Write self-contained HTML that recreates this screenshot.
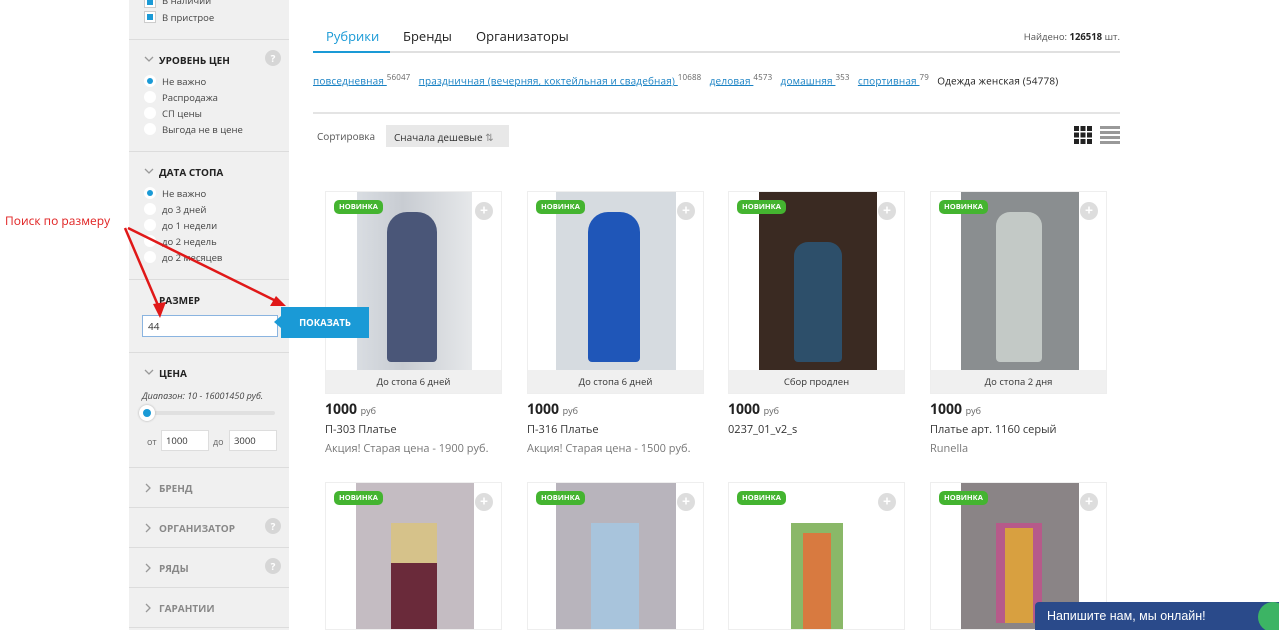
<!DOCTYPE html>
<html><head><meta charset="utf-8"><style>
*{box-sizing:border-box;margin:0;padding:0}
html,body{width:1279px;height:630px;overflow:hidden}
body{background:#fff;font-family:"Open Sans","Liberation Sans","DejaVu Sans",sans-serif;color:#333;position:relative;font-size:11px}
.sb{position:absolute;left:129px;top:0;width:160px;height:630px;background:#f0f0f0}
.ab{position:absolute}
.hr{position:absolute;left:129px;width:160px;height:1px;background:#dcdcdc}
.h{position:absolute;left:159px;font-weight:bold;font-size:10px;color:#222}
.hg{color:#888}
.chev{position:absolute;left:144px}
.q{position:absolute;left:265px;width:16px;height:16px;border-radius:50%;background:#d6d6d6;color:#fff;font-size:10px;font-weight:bold;text-align:center;line-height:16px}
.r{position:absolute;left:144px;width:12px;height:12px;border-radius:50%;background:#fff}
.r.on::after{content:"";position:absolute;left:3px;top:3px;width:6px;height:6px;border-radius:50%;background:#1a9ad6}
.rl{position:absolute;left:162px;font-size:9.5px;color:#444}
.card{position:absolute;width:177px;height:203px;border:1px solid #eee;background:#fff;overflow:hidden}
.img{position:absolute;top:0;height:178px}
.strip{position:absolute;left:0;right:0;top:178px;height:24px;background:#f0f0f0;font-size:9.5px;text-align:center;line-height:24px;color:#333}
.new{position:absolute;left:8px;top:8px;background:#44b430;color:#fff;font-size:7.5px;font-weight:bold;padding:2px 5px;border-radius:5px}
.plus{position:absolute;right:8px;top:10px;width:18px;height:18px;border-radius:50%;background:#ddd;color:#fff;font-weight:bold;font-size:14px;text-align:center;line-height:18px}
.price{position:absolute;font-size:14px;font-weight:bold;color:#222}
.price span{font-size:9px;font-weight:normal;color:#666}
.nm{position:absolute;font-size:11px;color:#333}
.ds{position:absolute;font-size:11px;color:#777}
a{color:#1a82c4;text-decoration:underline}
</style></head><body>
<div class="sb"></div>
<div class="ab" style="left:144px;top:-4px;width:12px;height:12px;background:#fff;border:1px solid #ccc"><div style="margin:2px;width:6px;height:6px;background:#1a9ad6"></div></div>
<div class="rl" style="top:-6px">В наличии</div>
<div class="ab" style="left:144px;top:11px;width:12px;height:12px;background:#fff;border:1px solid #ccc"><div style="margin:2px;width:6px;height:6px;background:#1a9ad6"></div></div>
<div class="rl" style="top:11px">В пристрое</div>
<div class="hr" style="top:39px"></div>
<svg class="chev" style="top:55px" width="10" height="8"><path d="M1 2 L5 6 L9 2" stroke="#999" stroke-width="1.3" fill="none"/></svg><div class="h" style="top:53px">УРОВЕНЬ ЦЕН</div><div class="q" style="top:50px">?</div>
<div class="r on" style="top:75px"></div><div class="rl" style="top:75px">Не важно</div>
<div class="r" style="top:91px"></div><div class="rl" style="top:91px">Распродажа</div>
<div class="r" style="top:107px"></div><div class="rl" style="top:107px">СП цены</div>
<div class="r" style="top:123px"></div><div class="rl" style="top:123px">Выгода не в цене</div>
<div class="hr" style="top:151px"></div>
<svg class="chev" style="top:167px" width="10" height="8"><path d="M1 2 L5 6 L9 2" stroke="#999" stroke-width="1.3" fill="none"/></svg><div class="h" style="top:165px">ДАТА СТОПА</div>
<div class="r on" style="top:187px"></div><div class="rl" style="top:187px">Не важно</div>
<div class="r" style="top:203px"></div><div class="rl" style="top:203px">до 3 дней</div>
<div class="r" style="top:219px"></div><div class="rl" style="top:219px">до 1 недели</div>
<div class="r" style="top:235px"></div><div class="rl" style="top:235px">до 2 недель</div>
<div class="r" style="top:251px"></div><div class="rl" style="top:251px">до 2 месяцев</div>
<div class="hr" style="top:279px"></div>
<div class="h" style="top:293px">РАЗМЕР</div>
<div class="ab" style="left:142px;top:315px;width:136px;height:22px;background:#fff;border:1px solid #8ab4e0;font-size:10px;padding:3px 5px">44</div>
<div class="hr" style="top:352px"></div>
<svg class="chev" style="top:368px" width="10" height="8"><path d="M1 2 L5 6 L9 2" stroke="#999" stroke-width="1.3" fill="none"/></svg><div class="h" style="top:366px">ЦЕНА</div>
<div class="ab" style="left:142px;top:389px;font-size:9px;font-style:italic;color:#444">Диапазон: 10 - 16001450 руб.</div>
<div class="ab" style="left:145px;top:411px;width:130px;height:4px;background:#e0e0e0;border-radius:2px"></div>
<div class="ab" style="left:139px;top:405px;width:16px;height:16px;border-radius:50%;background:#fff;box-shadow:0 0 2px #aaa"><div style="margin:4px;width:8px;height:8px;border-radius:50%;background:#1a9ad6"></div></div>
<div class="ab" style="left:147px;top:435px;font-size:9px;color:#666">от</div>
<div class="ab" style="left:161px;top:430px;width:48px;height:21px;background:#fff;border:1px solid #ddd;font-size:9.5px;padding:3px 4px">1000</div>
<div class="ab" style="left:213px;top:435px;font-size:9px;color:#666">до</div>
<div class="ab" style="left:229px;top:430px;width:48px;height:21px;background:#fff;border:1px solid #ddd;font-size:9.5px;padding:3px 4px">3000</div>
<div class="hr" style="top:467px"></div>
<svg class="chev" style="top:483px" width="8" height="10"><path d="M2 1 L6 5 L2 9" stroke="#999" stroke-width="1.3" fill="none"/></svg><div class="h hg" style="top:481px">БРЕНД</div>
<div class="hr" style="top:507px"></div>
<svg class="chev" style="top:523px" width="8" height="10"><path d="M2 1 L6 5 L2 9" stroke="#999" stroke-width="1.3" fill="none"/></svg><div class="h hg" style="top:521px">ОРГАНИЗАТОР</div><div class="q" style="top:518px">?</div>
<div class="hr" style="top:547px"></div>
<svg class="chev" style="top:563px" width="8" height="10"><path d="M2 1 L6 5 L2 9" stroke="#999" stroke-width="1.3" fill="none"/></svg><div class="h hg" style="top:561px">РЯДЫ</div><div class="q" style="top:558px">?</div>
<div class="hr" style="top:587px"></div>
<svg class="chev" style="top:603px" width="8" height="10"><path d="M2 1 L6 5 L2 9" stroke="#999" stroke-width="1.3" fill="none"/></svg><div class="h hg" style="top:601px">ГАРАНТИИ</div>
<div class="hr" style="top:627px"></div>

<div class="ab" style="left:313px;top:51px;width:807px;height:2px;background:#e0e0e0"></div>
<div class="ab" style="left:313px;top:51px;width:77px;height:2px;background:#1a9ad6"></div>
<div class="ab" style="left:326px;top:27px;font-size:13px;color:#1a9ad6">Рубрики</div>
<div class="ab" style="left:403px;top:27px;font-size:13px;color:#222">Бренды</div>
<div class="ab" style="left:476px;top:27px;font-size:13px;color:#222">Организаторы</div>
<div class="ab" style="right:159px;top:30px;font-size:9.5px;color:#555">Найдено: <b style="color:#222">126518</b> шт.</div>
<div class="ab" style="left:313px;top:72px;font-size:10px;white-space:nowrap;letter-spacing:0.15px"><a>повседневная </a><sup style="font-size:8px;color:#666">56047</sup>&nbsp;&nbsp; <a>праздничная (вечерняя, коктейльная и свадебная) </a><sup style="font-size:8px;color:#666">10688</sup>&nbsp;&nbsp; <a>деловая </a><sup style="font-size:8px;color:#666">4573</sup>&nbsp;&nbsp; <a>домашняя </a><sup style="font-size:8px;color:#666">353</sup>&nbsp;&nbsp; <a>спортивная </a><sup style="font-size:8px;color:#666">79</sup>&nbsp;&nbsp; <span style="color:#222">Одежда женская (54778)</span></div>
<div class="ab" style="left:313px;top:112px;width:807px;height:2px;background:#e4e4e4"></div>
<div class="ab" style="left:317px;top:129px;font-size:10px;color:#555">Сортировка</div>
<div class="ab" style="left:386px;top:125px;width:123px;height:22px;background:#e8e8e8;font-size:10px;color:#333;padding:5px 8px">Сначала дешевые <span style="color:#888">⇅</span></div>
<svg class="ab" style="left:1074px;top:126px" width="18" height="18"><g fill="#222"><rect x="0" y="0" width="5" height="5"/><rect x="6.5" y="0" width="5" height="5"/><rect x="13" y="0" width="5" height="5"/><rect x="0" y="6.5" width="5" height="5"/><rect x="6.5" y="6.5" width="5" height="5"/><rect x="13" y="6.5" width="5" height="5"/><rect x="0" y="13" width="5" height="5"/><rect x="6.5" y="13" width="5" height="5"/><rect x="13" y="13" width="5" height="5"/></g></svg>
<svg class="ab" style="left:1100px;top:126px" width="20" height="18"><g fill="#999"><rect y="0" width="20" height="3"/><rect y="5" width="20" height="3"/><rect y="10" width="20" height="3"/><rect y="15" width="20" height="3"/></g></svg>

<!-- row 1 -->
<div class="card" style="left:325px;top:191px"><div class="img" style="left:31px;width:115px;background:linear-gradient(90deg,#d9dde2,#c8ccd2 40%,#e6e8ea)"><div style="position:absolute;left:30px;top:20px;width:50px;height:150px;background:#4a5678;border-radius:20px 20px 4px 4px"></div></div><div class="strip">До стопа 6 дней</div><div class="new">НОВИНКА</div><div class="plus">+</div></div>
<div class="card" style="left:527px;top:191px"><div class="img" style="left:28px;width:120px;background:#d6dbe0"><div style="position:absolute;left:32px;top:20px;width:52px;height:150px;background:#1f56b8;border-radius:20px 20px 4px 4px"></div></div><div class="strip">До стопа 6 дней</div><div class="new">НОВИНКА</div><div class="plus">+</div></div>
<div class="card" style="left:728px;top:191px"><div class="img" style="left:30px;width:118px;background:#3a2a22"><div style="position:absolute;left:35px;top:50px;width:48px;height:120px;background:#2d4f6a;border-radius:14px 14px 4px 4px"></div></div><div class="strip">Сбор продлен</div><div class="new">НОВИНКА</div><div class="plus">+</div></div>
<div class="card" style="left:930px;top:191px"><div class="img" style="left:30px;width:118px;background:#8a8e90"><div style="position:absolute;left:35px;top:20px;width:46px;height:150px;background:#c3c9c6;border-radius:14px 14px 4px 4px"></div></div><div class="strip">До стопа 2 дня</div><div class="new">НОВИНКА</div><div class="plus">+</div></div>
<div class="price" style="left:325px;top:400px">1000 <span>руб</span></div><div class="nm" style="left:325px;top:422px">П-303 Платье</div><div class="ds" style="left:325px;top:441px">Акция! Старая цена - 1900 руб.</div>
<div class="price" style="left:527px;top:400px">1000 <span>руб</span></div><div class="nm" style="left:527px;top:422px">П-316 Платье</div><div class="ds" style="left:527px;top:441px">Акция! Старая цена - 1500 руб.</div>
<div class="price" style="left:728px;top:400px">1000 <span>руб</span></div><div class="nm" style="left:728px;top:422px">0237_01_v2_s</div>
<div class="price" style="left:930px;top:400px">1000 <span>руб</span></div><div class="nm" style="left:930px;top:422px">Платье арт. 1160 серый</div><div class="ds" style="left:930px;top:441px">Runella</div>

<!-- row 2 -->
<div class="card" style="left:325px;top:482px;height:148px"><div class="img" style="left:30px;width:118px;height:160px;background:#c4bcc2"><div style="position:absolute;left:35px;top:40px;width:46px;height:120px;background:#6a2a3a"></div><div style="position:absolute;left:35px;top:40px;width:46px;height:40px;background:#d6c28a"></div></div><div class="new">НОВИНКА</div><div class="plus">+</div></div>
<div class="card" style="left:527px;top:482px;height:148px"><div class="img" style="left:28px;width:120px;height:160px;background:#b8b4bc"><div style="position:absolute;left:35px;top:40px;width:48px;height:120px;background:#a8c4dc"></div></div><div class="new">НОВИНКА</div><div class="plus">+</div></div>
<div class="card" style="left:728px;top:482px;height:148px"><div class="img" style="left:30px;width:118px;height:160px;background:#fff"><div style="position:absolute;left:32px;top:40px;width:52px;height:120px;background:#8ab868"></div><div style="position:absolute;left:44px;top:50px;width:28px;height:110px;background:#d87a40"></div></div><div class="new">НОВИНКА</div><div class="plus">+</div></div>
<div class="card" style="left:930px;top:482px;height:148px"><div class="img" style="left:30px;width:118px;height:160px;background:#8a8486"><div style="position:absolute;left:35px;top:40px;width:46px;height:100px;background:#b65a8a"></div><div style="position:absolute;left:44px;top:45px;width:28px;height:95px;background:#d8a040"></div></div><div class="new">НОВИНКА</div><div class="plus">+</div></div>

<div class="ab" style="left:281px;top:307px;width:88px;height:31px;background:#1a9ad6;color:#fff;font-weight:bold;font-size:9.5px;text-align:center;line-height:31px;z-index:5">ПОКАЗАТЬ</div>
<div class="ab" style="left:274px;top:316px;width:0;height:0;border-top:6px solid transparent;border-bottom:6px solid transparent;border-right:7px solid #1a9ad6;z-index:5"></div>

<div class="ab" style="left:1035px;top:602px;width:244px;height:28px;background:#2a4a8a;border-radius:4px 0 0 0;color:#fff;font-family:'Liberation Sans',sans-serif;font-size:12.5px;padding:7px 12px;z-index:6">Напишите нам, мы онлайн!</div>
<div class="ab" style="left:1258px;top:602px;width:30px;height:30px;border-radius:50%;background:#3cb464;z-index:7"></div>

<div class="ab" style="left:5px;top:212px;font-size:12px;color:#e02020">Поиск по размеру</div>
<svg class="ab" style="left:0;top:0;z-index:8" width="400" height="400"><g stroke="#e01818" stroke-width="2.5" fill="#e01818"><line x1="125" y1="228" x2="160" y2="310"/><polygon points="160,318 153,304 166,302" stroke="none"/><line x1="128" y1="228" x2="278" y2="302"/><polygon points="286,306 270,306 276,296" stroke="none"/></g></svg>
</body></html>
